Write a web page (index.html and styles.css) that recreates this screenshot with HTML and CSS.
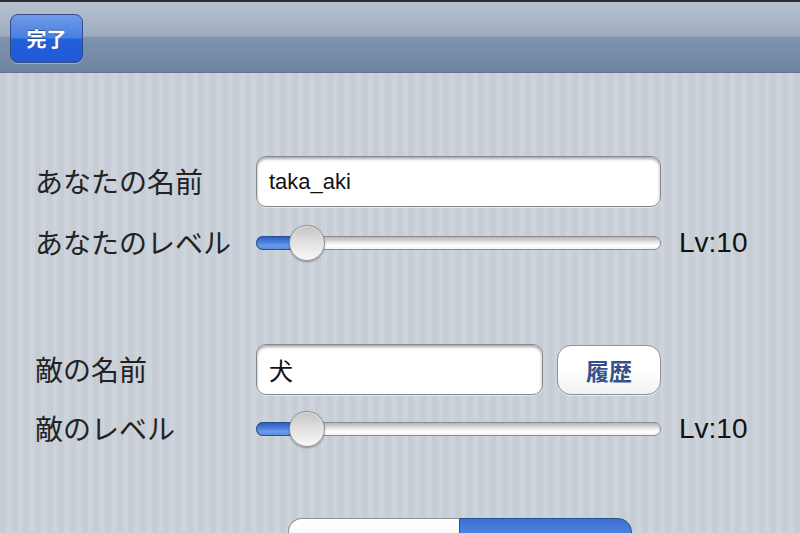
FILE: index.html
```html
<!DOCTYPE html>
<html lang="ja">
<head>
<meta charset="utf-8">
<title>設定</title>
<link rel="stylesheet" href="styles.css">
</head>
<body>
<div class="navbar">
  <button class="done-btn">完了</button>
</div>
<main class="content">
  <section class="group group-first">
    <div class="label">あなたの名前</div>
    <div class="field field-wide">taka_aki</div>
    <div></div>

    <div class="label">あなたのレベル</div>
    <div class="slider"><div class="track-fill" style="width:50px"></div><div class="thumb" style="left:32px"></div></div>
    <div class="value">Lv:10</div>
  </section>

  <section class="group group-second">
    <div class="label">敵の名前</div>
    <div class="field-row">
      <div class="field field-short cjk">犬</div>
      <button class="history-btn">履歴</button>
    </div>
    <div></div>

    <div class="label">敵のレベル</div>
    <div class="slider"><div class="track-fill" style="width:50px"></div><div class="thumb" style="left:32px"></div></div>
    <div class="value">Lv:10</div>
  </section>

  <div class="segmented">
    <div class="seg seg-left"></div>
    <div class="seg seg-right"></div>
  </div>
</main>
</body>
</html>
```
FILE: styles.css
```css
* { box-sizing: border-box; }
html, body {
  margin: 0;
  padding: 0;
}
body {
  width: 800px;
  height: 533px;
  overflow: hidden;
  font-family: "Liberation Sans", "Noto Sans CJK JP", sans-serif;
  background-color: #c5ccd4;
  background-image: repeating-linear-gradient(90deg,
    #c6cdd5 0px, #c6cdd5 6px,
    #ccd3da 6px, #ccd3da 11.67px);
}
.navbar {
  height: 73px;
  border-top: 2px solid #2c2e33;
  border-bottom: 1px solid #5f7290;
  background: linear-gradient(to bottom,
    #b8c2cf 0%, #9dacbf 49%, #7f94af 50%, #6e84a1 100%);
  display: flex;
  align-items: center;
  padding-left: 10px;
}
.done-btn {
  width: 73px;
  height: 49px;
  margin-top: 3px;
  border: 1px solid #2f4c84;
  border-radius: 8px;
  background: linear-gradient(to bottom,
    #6f9ae8 0%, #4a80e2 48%, #2360dc 52%, #1f59d6 100%);
  box-shadow: 0 1px 0 rgba(255,255,255,0.35);
  color: #ffffff;
  font-family: "Noto Sans CJK JP", sans-serif;
  font-weight: 700;
  font-size: 20px;
  padding: 0;
  text-shadow: 0 -1px 0 rgba(0,0,0,0.35);
}
.content {
  height: 460px;
  overflow: hidden;
  padding-left: 35px;
}
.group {
  display: grid;
  grid-template-columns: 221px 405px auto;
  align-items: center;
}
.group-first {
  margin-top: 83px;
  grid-template-rows: 51px 36px;
  row-gap: 18px;
}
.group-second {
  margin-top: 83px;
  grid-template-rows: 51px 36px;
  row-gap: 16px;
}
.label {
  font-family: "Noto Sans CJK JP", sans-serif;
  font-size: 28px;
  color: #222;
  white-space: nowrap;
  line-height: 1;
  margin-top: -2px;
}
.field {
  height: 51px;
  background: #ffffff;
  border: 1px solid #85888d;
  border-radius: 10px;
  box-shadow: inset 0 2px 3px rgba(0,0,0,0.35), 0 1px 0 rgba(255,255,255,0.5);
  display: flex;
  align-items: center;
  padding-left: 12px;
  font-size: 22px;
  color: #111;
}
.field-wide { width: 405px; }
.field-short { width: 287px; }
.cjk {
  font-family: "Noto Sans CJK JP", sans-serif;
  font-size: 24px;
}
.field-row {
  display: flex;
  gap: 14px;
  align-items: center;
}
.history-btn {
  width: 104px;
  height: 50px;
  border: 1px solid #8f9297;
  border-radius: 14px;
  background: linear-gradient(to bottom, #ffffff 0%, #ffffff 50%, #f1f1f1 100%);
  box-shadow: 0 1px 0 rgba(255,255,255,0.5);
  color: #34518a;
  font-family: "Noto Sans CJK JP", sans-serif;
  font-weight: 700;
  font-size: 23px;
  padding: 0;
}
.slider {
  position: relative;
  width: 405px;
  height: 14px;
  border-radius: 7px;
  border: 1px solid #8c8c8c;
  background: linear-gradient(to bottom, #b4b4b4 0%, #e8e8e8 45%, #ffffff 70%, #f4f4f4 100%);
}
.track-fill {
  position: absolute;
  left: -1px;
  top: -1px;
  bottom: -1px;
  border-radius: 7px 0 0 7px;
  border: 1px solid #2a4f95;
  border-right: none;
  background: linear-gradient(to bottom, #2f5fb8 0%, #4a82e0 45%, #6a9ae8 70%, #5a8ee6 100%);
}
.thumb {
  position: absolute;
  top: -12px;
  width: 36px;
  height: 36px;
  border-radius: 50%;
  border: 1px solid #8e8e8e;
  background: linear-gradient(to bottom, #c4c4c4 0%, #e2e2e2 50%, #f8f8f8 100%);
  box-shadow: 0 1px 2px rgba(0,0,0,0.3), inset 0 1px 0 rgba(255,255,255,0.6);
}
.value {
  padding-left: 18px;
  font-size: 28px;
  color: #111;
  line-height: 1;
}
.segmented {
  margin-top: 71px;
  margin-left: 253px;
  width: 344px;
  height: 44px;
  display: flex;
}
.seg {
  height: 44px;
}
.seg-left {
  width: 171px;
  border: 1px solid #8f9297;
  border-right: none;
  border-radius: 14px 0 0 14px;
  background: linear-gradient(to bottom, #ffffff 0%, #f2f2f2 100%);
}
.seg-right {
  width: 173px;
  border: 1px solid #2a4f95;
  border-radius: 0 14px 14px 0;
  background: linear-gradient(to bottom, #3c6fd0 0%, #4a80e0 30%, #3a74dc 100%);
}
```
